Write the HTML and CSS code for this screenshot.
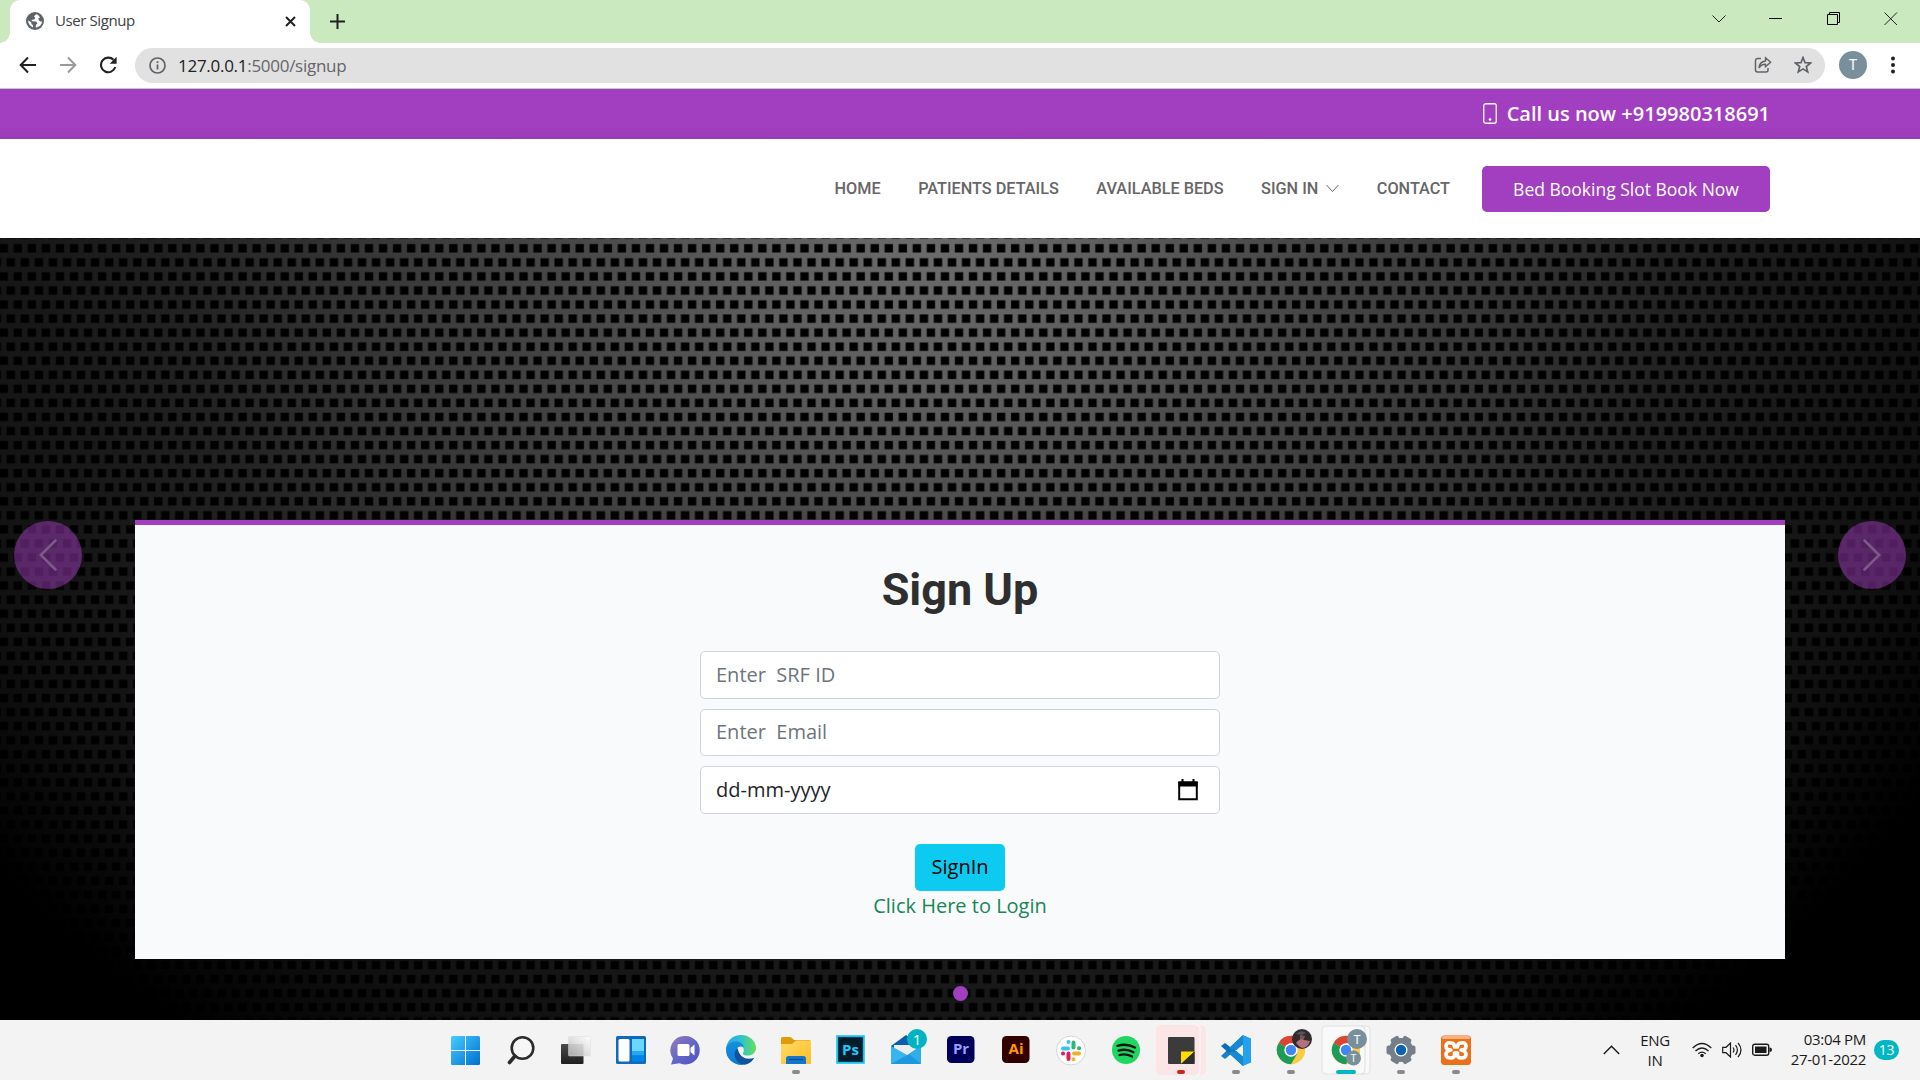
FILE: index.html
```html
<!DOCTYPE html>
<html lang="en">
<head>
<meta charset="utf-8">
<title>User Signup</title>
<link rel="stylesheet" href="styles.css">
</head>
<body>
<div class="tabstrip">
  <div class="tab">
    <svg class="globe" width="18" height="18" viewBox="0 0 18 18"><circle cx="9" cy="9" r="9" fill="#5f6368"/><path d="M10 2.2 8 4.6l1.3 1.2-1 1.6-2.6.3.1 1.6 4.300 .3 1.300 1.900-1.500 1.400-.2 2.800C13.500 15 16 12.500 16 9.500c-1.800.5-2.200-.8-3.300-1.300l-.2-2 1.600-1C13 3.600 11.600 2.500 10 2.200zM2.100 8.300c0 3.300 2 6.200 5 7.200l-.2-2.600 -1.600-.9.1-1.500z" fill="#fff"/></svg>
    <span class="tab-title">User Signup</span>
    <svg class="tab-x" width="11" height="11" viewBox="0 0 11 11"><path d="M1 1l9 9M10 1l-9 9" stroke="#202124" stroke-width="2"/></svg>
  </div>
  <svg class="newtab" width="15" height="15" viewBox="0 0 15 15"><path d="M7.500 0v15M0 7.500h15" stroke="#202124" stroke-width="2"/></svg>
  <div class="winctl">
    <svg width="14" height="14" viewBox="0 0 14 14"><path d="M.5 3.500 7 10l6.500-6.500" fill="none" stroke="#222"/></svg>
    <svg width="14" height="14" viewBox="0 0 14 14"><path d="M0 6.500h13" stroke="#000"/></svg>
    <svg width="14" height="14" viewBox="0 0 14 14"><path d="M.5 2.500h10v10H.5zM2.500 2.500v-2h10v10h-2" fill="none" stroke="#000"/></svg>
    <svg width="14" height="14" viewBox="0 0 14 14"><path d="M.5.5l12.500 12.500M13 .5.5 13" stroke="#222"/></svg>
  </div>
</div>
<div class="toolbar">
  <svg width="18" height="18" viewBox="0 0 18 18"><path d="M17 9H2M9 1.500 1.700 9 9 16.500" fill="none" stroke="#202124" stroke-width="2"/></svg>
  <svg width="18" height="18" viewBox="0 0 18 18"><path d="M1 9h15M9 1.500 16.300 9 9 16.500" fill="none" stroke="#9a9a9c" stroke-width="2"/></svg>
  <svg width="18" height="18" viewBox="0 0 18 18"><path d="M14.500 3.800A7.300 7.300 0 1 0 16.300 11" fill="none" stroke="#202124" stroke-width="2.100"/><path d="M17.600 .8v7h-7z" fill="#202124"/></svg>
  <div class="omnibox">
    <svg width="17" height="17" viewBox="0 0 17 17"><circle cx="8.500" cy="8.500" r="7.500" fill="none" stroke="#5f6368" stroke-width="1.700"/><path d="M8.500 7.500v5M8.500 4.200v1.900" stroke="#5f6368" stroke-width="1.800"/></svg>
    <span class="url"><b>127.0.0.1</b>:5000/signup</span>
    <svg class="share" width="18" height="18" viewBox="0 0 18 18"><path d="M7 2.500H3.500a2 2 0 0 0-2 2v9.500a2 2 0 0 0 2 2H12a2 2 0 0 0 2-2v-2" fill="none" stroke="#5f6368" stroke-width="1.500"/><path d="M11.500 1.800 16.600 6.300l-5.100 4.400V8.200C8.500 8.200 6.300 9.500 5 12c.2-4 2.500-6.500 6.500-7z" fill="none" stroke="#5f6368" stroke-width="1.400"/></svg>
    <svg width="18" height="18" viewBox="0 0 18 18"><path d="M9 1.500l2 5.200 5.600.3-4.300 3.500 1.400 5.400L9 12.900l-4.700 3 1.400-5.400L1.400 7l5.600-.3z" fill="none" stroke="#5f6368" stroke-width="1.700"/></svg>
  </div>
  <span class="avatar">T</span>
  <svg class="dots" width="4" height="18" viewBox="0 0 4 18"><g fill="#202124"><circle cx="2" cy="2.500" r="2"/><circle cx="2" cy="9" r="2"/><circle cx="2" cy="15.500" r="2"/></g></svg>
</div>
<div class="topbar">
  <svg width="14" height="21" viewBox="0 0 14 21"><rect x=".75" y=".75" width="12.500" height="19.500" rx="2" fill="none" stroke="#fff" stroke-width="1.300"/><circle cx="7" cy="16.500" r="1.300" fill="#fff"/></svg>
  <span>Call us now +919980318691</span>
</div>
<header class="header">
  <nav class="nav">
    <a class="n1">HOME</a><a class="n2">PATIENTS DETAILS</a><a class="n3">AVAILABLE BEDS</a>
    <a class="n4">SIGN IN <svg width="13" height="9" viewBox="0 0 13 9"><path d="M.5 1 6.500 7.500 12.500 1" fill="none" stroke="#666"/></svg></a>
    <a class="n5">CONTACT</a>
  </nav>
  <a class="book">Bed Booking Slot Book Now</a>
</header>
<main class="hero">
  <svg class="mesh" width="1920" height="782" viewBox="0 238 1920 782">
    <defs>
      <radialGradient id="glow" gradientUnits="userSpaceOnUse" cx="0" cy="0" r="1" gradientTransform="translate(930 245) scale(1190 1000)">
        <stop offset="0" stop-color="#6b6b6b"/><stop offset=".15" stop-color="#5e5e5e"/><stop offset=".29" stop-color="#494949"/><stop offset=".48" stop-color="#363636"/><stop offset=".62" stop-color="#232323"/><stop offset=".75" stop-color="#181818"/><stop offset=".87" stop-color="#101010"/><stop offset="1" stop-color="#000"/>
      </radialGradient>
      <pattern id="holes" patternUnits="userSpaceOnUse" x="10.800" y="241.300" width="14.048" height="28.108">
        <g fill="#000" fill-opacity=".35"><rect x="2.500" y="2.500" width="9" height="9"/><rect x="-4.500" y="16.600" width="9" height="9"/><rect x="9.550" y="16.600" width="9" height="9"/></g>
        <g fill="#000"><rect x="3" y="3" width="8" height="8"/><rect x="-4" y="17.100" width="8" height="8"/><rect x="10.050" y="17.100" width="8" height="8"/></g>
      </pattern>
    </defs>
    <rect y="238" width="1920" height="782" fill="url(#glow)"/>
    <rect y="238" width="1920" height="782" fill="url(#holes)"/>
  </svg>
  <div class="arrow"><svg width="18" height="32" viewBox="0 0 18 32"><path d="M16.500 1.500 1.800 16l14.700 14.500" fill="none" stroke="#7c5a87" stroke-width="2.600" stroke-linecap="round"/></svg></div>
  <section class="card">
    <h2>Sign Up</h2>
    <form>
      <div class="field">Enter&nbsp; SRF ID</div>
      <div class="field email">Enter&nbsp; Email</div>
      <div class="field date">dd-mm-yyyy
        <svg width="20" height="22" viewBox="0 0 20 22"><path d="M1.200 3.500h17.600v16.800H1.200z" fill="none" stroke="#000" stroke-width="2"/><path d="M.5 2.500h19v5H.5zM3.500 0h2v3h-2zM14.500 0h2v3h-2z"/></svg></div>
      <a class="signin">SignIn</a>
      <a class="login">Click Here to Login</a>
    </form>
  </section>
  <div class="arrow"><svg width="18" height="32" viewBox="0 0 18 32"><path d="M1.500 1.500 16.200 16 1.500 30.500" fill="none" stroke="#7c5a87" stroke-width="2.600" stroke-linecap="round"/></svg></div>
  <span class="indicator"></span>
</main>
<footer class="taskbar">
  <div class="apps">
    <svg viewBox="0 0 55 60"><defs><linearGradient id="win" x1="0" y1="0" x2="1" y2="1"><stop stop-color="#45cdff"/><stop offset="1" stop-color="#006fd0"/></linearGradient><clipPath id="wc"><path d="M13 16h14v14H13zM28 16h14v14H28zM13 31h14v14H13zM28 31h14v14H28z"/></clipPath></defs><rect x="13" y="16" width="29" height="29" rx="1.500" fill="url(#win)" clip-path="url(#wc)"/></svg>
    <svg viewBox="0 0 55 60"><circle cx="29.500" cy="28" r="10.800" fill="#f6f6f6" stroke="#2b2b2b" stroke-width="2.600"/><path d="M22 36 16.500 42.500" stroke="#2b2b2b" stroke-width="3.600" stroke-linecap="round"/></svg>
    <svg viewBox="0 0 55 60"><defs><linearGradient id="tv" x1="0" y1="0" x2="0" y2="1"><stop stop-color="#4b4b4b"/><stop offset="1" stop-color="#1e1e1e"/></linearGradient><linearGradient id="tw" x1="1" y1="0" x2="0" y2="1"><stop stop-color="#fff"/><stop offset="1" stop-color="#bcbcbc"/></linearGradient></defs><rect x="13" y="24" width="22.500" height="20" rx="1" fill="url(#tv)"/><rect x="20.500" y="16.500" width="22" height="19.500" rx="1" fill="url(#tw)" fill-opacity=".88" stroke="#ddd" stroke-width=".5"/></svg>
    <svg viewBox="0 0 55 60"><rect x="13" y="16" width="30" height="28" rx="1.500" fill="#1169bd"/><rect x="15.500" y="19" width="11" height="22.500" rx="1.500" fill="#fff"/><path d="M29 19h12v12H29z" fill="#69d7ff"/><path d="M29 31h12v4.500H29z" fill="#20a8f5"/><path d="M29 35.500h12v6H29z" fill="#0084e8"/></svg>
    <svg viewBox="0 0 55 60"><defs><linearGradient id="chat" x1="0" y1="0" x2="1" y2="1"><stop stop-color="#9b79ba"/><stop offset=".5" stop-color="#6367c7"/><stop offset="1" stop-color="#4f50bf"/></linearGradient></defs><path d="M27.500 16a14.300 14.300 0 1 1-6 27.300L13 44.500l2-6A14.300 14.300 0 0 1 27.500 16z" fill="url(#chat)"/><rect x="19.500" y="24" width="12" height="12" rx="1.500" fill="#fff"/><path d="m32.500 28 4-3.500v11l-4-3.500z" fill="#fff"/></svg>
    <svg viewBox="0 0 55 60"><defs><linearGradient id="ed1"><stop stop-color="#2aa4e6"/><stop offset=".5" stop-color="#2fc2cf"/><stop offset="1" stop-color="#68e052"/></linearGradient><linearGradient id="ed2" x1="0" y1="0" x2="0" y2="1"><stop stop-color="#1490df"/><stop offset="1" stop-color="#0c79d4"/></linearGradient></defs><path d="M13 29C14 20 20 15 28 15c9 0 15 6.500 15 13 0 5-4 7.500-8.500 7.500-4 0-5.500-1.300-4-3.500 1.500-3-1-7-6-7S14 28 13 29z" fill="url(#ed1)"/><path d="M13 29c1-5 5-7.500 10-7.500 4 0 7 2 7.800 5.500C25 25 22.500 29 23 34c.5 5 4 9.500 8.500 10.800C21 46 12.500 39 13 29z" fill="url(#ed2)"/><path d="M24.500 28c-5 4-3.500 15.500 7 16.700 4-.7 8-3.200 9.800-7-7 2.800-15 .3-16.800-9.700z" fill="#11529e"/></svg>
    <svg viewBox="0 0 55 60"><defs><linearGradient id="fo" x1="0" y1="0" x2="1" y2="1"><stop stop-color="#ffdb69"/><stop offset="1" stop-color="#ffbd22"/></linearGradient></defs><path d="M13 18.500q0-1.500 1.500-1.500H22q1.500 0 2.500 1.500l1.500 1.500h16v5H13z" fill="#e09b0a"/><path d="M13 24h11l4-3.500h15V44H13z" fill="url(#fo)"/><path d="M18 44v-5.500q0-2.500 2.500-2.500h15q2.500 0 2.500 2.500V44z" fill="#1476cb"/><path d="M21 39.500h14" stroke="#0a4e91" stroke-width="1.300"/><rect class="run" x="24" y="50" width="8" height="4" rx="2"/></svg>
    <svg viewBox="0 0 55 60"><rect x="14.200" y="16.200" width="26.600" height="26.600" fill="#001d2b" stroke="#18c3f3" stroke-width="2"/><text x="27.500" y="34.500" class="ad" fill="#23c7ff">Ps</text></svg>
    <svg viewBox="0 0 55 60"><path d="M13 26 28 15l15 11v4H13z" fill="#0a5fac"/><path d="M16 25h24v6l-10 8-14-8z" fill="#ececec"/><path d="M13 26l18 10-9 8h-9z" fill="#36b5ef"/><path d="M43 26v18H13l18-10z" fill="#1c98df"/><path d="M31 34l12 10V26z" fill="#30aeea"/><circle cx="39" cy="19" r="10" fill="#00b4c3"/><text x="39" y="24.500" class="bt">1</text></svg>
    <svg viewBox="0 0 55 60"><rect x="14" y="16" width="27.500" height="27" rx="4.500" fill="#00005b"/><text x="28" y="34" class="ad" fill="#9d9dff">Pr</text></svg>
    <svg viewBox="0 0 55 60"><rect x="14" y="16" width="27.500" height="27" rx="4.500" fill="#330000"/><text x="28" y="34" class="ad" fill="#ff9a00">Ai</text></svg>
    <svg viewBox="0 0 55 60"><circle cx="28" cy="30.500" r="14.500" fill="#fff" stroke="#d5d5d5"/><g fill="none" stroke-width="4" stroke-linecap="round"><path d="M20 28.500h5M25.500 22v.1" stroke="#36c5f0"/><path d="M30.500 22.500v5M36 28.300h.1" stroke="#2eb67d"/><path d="M31 33.500h5M30.500 39.200v.1" stroke="#ecb22e"/><path d="M25.500 33.500v5.500M20 33.500h.1" stroke="#e01e5a"/></g></svg>
    <svg viewBox="0 0 55 60"><circle cx="28" cy="30" r="14" fill="#1ed760"/><path d="M19.500 25.800q9-2.800 17.500 1.700M20.500 30.600q8-2.300 15 1.600M21.500 35q6.500-1.800 12.500 1.600" fill="none" stroke="#141414" stroke-width="2.300" stroke-linecap="round"/></svg>
    <svg viewBox="0 0 55 60"><rect x="3" y="5" width="50" height="50" rx="5" fill="#fce5e7"/><path d="M43 5q4 0 4 4v42q0 4-4 4" fill="none" stroke="#fff3f4" stroke-width="1.300"/><rect x="15" y="17" width="26.500" height="27" rx="1" fill="#3b3b3b"/><path d="M28 44V31.500h13.500z" fill="#ffdd00"/><path d="M28 44 41.500 31.500V44z" fill="#2f2f2f"/><rect x="24" y="50" width="8" height="4" rx="2" fill="#c42b1c"/></svg>
    <svg viewBox="0 0 55 60"><path d="m35 15 8 3.500v24L35 46z" fill="#23a0ee"/><path d="M35 15v9L17 39l-4-3z" fill="#1683cc"/><path d="M35 46v-9L17 23l-4 3z" fill="#0c6fb8"/><path d="M35 15 21 28l5 4 9-7.500zM35 46 21 33l5-4 9 7.500z" fill="#1788d2"/><rect class="run" x="24" y="50" width="8" height="4" rx="2"/></svg>
    <svg viewBox="0 0 55 60"><g id="chrome"><circle cx="28" cy="30" r="14.200" fill="#fbcb43"/><path d="M28 30 15.700 22.900A14.200 14.200 0 0 1 40.300 22.900H28z" fill="#dc4437"/><path d="M15.700 22.900A14.200 14.200 0 0 0 28 44.200l6.200-10.500L28 30z" fill="#1e9c55"/><circle cx="28" cy="30" r="6.700" fill="#fff"/><circle cx="28" cy="30" r="5.200" fill="#4285f4"/></g><circle cx="39" cy="19" r="10" fill="#332a2d"/><path d="M33 23q5-6 8-3l6 1q-2 7-8 7-3-1-6-5z" fill="#b3727b"/><path d="M33 14q5-5 10-1l-4 2z" fill="#4e5659"/><path d="M37 15l5 1-1 3h-4z" fill="#7c5654"/><rect class="run" x="24" y="50" width="8" height="4" rx="2"/></svg>
    <svg viewBox="0 0 55 60"><rect x="4" y="6" width="48" height="48" rx="4" fill="#f9f9f9" stroke="#e2e2e2"/><path d="M43 6q4 0 4 4v40q0 4-4 4" fill="none" stroke="#ddd"/><use href="#chrome"/><circle cx="39" cy="19" r="10" fill="#78909c"/><text x="39" y="23.500" class="tt">T</text><circle cx="35.500" cy="38" r="7.500" fill="#78909c"/><text x="35.500" y="41.500" class="tt small">T</text><rect x="18" y="50" width="20" height="4" rx="2" fill="#00b7c3"/></svg>
    <svg viewBox="0 0 55 60"><g fill="#757f89"><circle cx="28" cy="30" r="12"/><rect x="23.500" y="15.500" width="9" height="29" rx="2" transform="rotate(30 28 30)"/><rect x="23.500" y="15.500" width="9" height="29" rx="2" transform="rotate(90 28 30)"/><rect x="23.500" y="15.500" width="9" height="29" rx="2" transform="rotate(-30 28 30)"/></g><circle cx="28" cy="30" r="6.500" fill="#fff"/><circle cx="28" cy="30" r="5.200" fill="#0b62b5"/><rect class="run" x="24" y="50" width="8" height="4" rx="2"/></svg>
    <svg viewBox="0 0 55 60"><rect x="13" y="15.500" width="30" height="29.500" rx="3.500" fill="#ec6f1a"/><rect x="14" y="16" width="28" height="3" rx="1.500" fill="#ffb27e"/><path d="M23 23q-5-1-5 3t5 4q-5 1-5 4.500t5 3.500q3.500 0 3.500-3V33h3v2q0 3 3.500 3 5 0 5-3.500T33 30q5 0 5-4t-5-3q-3.500 0-3.500 4h-3q0-4-3.500-4z" fill="none" stroke="#fff" stroke-width="3.600" stroke-linejoin="round"/><rect class="run" x="24" y="50" width="8" height="4" rx="2"/></svg>
  </div>
  <div class="tray">
    <svg class="up" width="17" height="10" viewBox="0 0 17 10"><path d="M.8 9 8.500 1.200 16.200 9" fill="none" stroke="#1a1a1a" stroke-width="1.400"/></svg>
    <div class="lang">ENG<br>IN</div>
    <svg width="20" height="16" viewBox="0 0 20 16"><g fill="none" stroke="#1a1a1a" stroke-width="1.300"><path d="M.7 6Q10-3 19.300 6M3.500 9q6.500-6 13 0M6.300 11.800q3.700-3.300 7.400 0"/></g><circle cx="10" cy="13.500" r="1.800" fill="#1a1a1a"/></svg>
    <svg width="20" height="16" viewBox="0 0 20 16"><g fill="none" stroke="#1a1a1a" stroke-width="1.200"><path d="M.7 5.300h3.300L8.500 1v14L4 10.700H.7zM11 5.500q2 2.500 0 5M13.500 3.200q3.800 4.800 0 9.600M16 .8q6 7.200 0 14.400"/></g></svg>
    <svg width="20" height="14" viewBox="0 0 20 14"><rect x=".7" y="1.200" width="16" height="11" rx="2" fill="none" stroke="#1a1a1a" stroke-width="1.400"/><rect x="3" y="3.500" width="11.500" height="6.500" fill="#1a1a1a"/><path d="M17.500 4.500q2.500 0 2.500 2.300t-2.500 2.300z" fill="#1a1a1a"/></svg>
    <div class="clock">03:04 PM<br>27-01-2022</div>
    <span class="count">13</span>
  </div>
</footer>
</body>
</html>
```
FILE: styles.css
```css
* { box-sizing: border-box; }
body { margin: 0; width: 1920px; height: 1080px; overflow: hidden; display: flex; flex-direction: column; background: #fff; font-family: "Open Sans", "Noto Sans", sans-serif; }
svg { display: block; flex: none; }

.tabstrip { height: 43px; flex: none; background: #cae9bf; display: flex; align-items: flex-start; padding-left: 10px; }
.tab { position: relative; width: 300px; height: 43px; background: #fff; border-radius: 10px 10px 0 0; display: flex; align-items: center; padding: 0 14px 1px 16px; }
.tab::before, .tab::after { content: ""; position: absolute; bottom: 0; width: 10px; height: 10px; }
.tab::before { left: -10px; background: radial-gradient(circle at 0 0, transparent 9.5px, #fff 10px); }
.tab::after { right: -10px; background: radial-gradient(circle at 100% 0, transparent 9.5px, #fff 10px); }
.tab-title { margin: 0 0 2px 11px; font-size: 15px; color: #3c4043; letter-spacing: -.4px; }
.tab-x { margin-left: auto; }
.newtab { margin: 14px 0 0 20px; }
.winctl { margin: 12px 22px 0 auto; display: flex; gap: 43.3px; }

.toolbar { height: 46px; flex: none; border-bottom: 1px solid #c5c8c3; display: flex; align-items: center; padding: 0 24px 1px 19px; }
.toolbar > svg + svg:not(.dots) { margin-left: 22px; }
.omnibox { margin-left: 18px; width: 1690px; height: 35px; border-radius: 18px; background: #e1e1e1; display: flex; align-items: center; padding: 0 13px 0 14px; }
.url { margin-left: 12px; font-size: 17px; color: #63666a; letter-spacing: -.28px; }
.url b { font-weight: 400; color: #202124; }
.share { margin-left: auto; margin-right: 22px; }
.avatar { margin-left: 14px; width: 28px; height: 28px; border-radius: 50%; background: #78909c; color: #fff; font: 14px/28px Roboto, sans-serif; text-align: center; }
.dots { margin-left: auto; margin-right: 1px; }

.topbar { height: 50px; flex: none; background: linear-gradient(#a23ec0 75%, #9a3bb6); display: flex; align-items: center; justify-content: flex-end; gap: 10px; padding: 0 150px 1px 0; color: #fff; font-size: 20px; font-weight: 600; }
.header { height: 99px; flex: none; background: #fff; display: flex; align-items: center; justify-content: flex-end; padding-right: 150px; }
.nav { display: flex; align-items: center; gap: 37.5px; margin-right: 32px; font: 500 16.25px/20px Roboto, sans-serif; color: #666; }
.n4 { display: flex; align-items: center; gap: 8px; }
.book { width: 288px; height: 46px; border-radius: 5px; background: #a23ec0; color: #fff; font-size: 17.5px; line-height: 46px; text-align: center; }

.hero { position: relative; height: 782px; flex: none; background: #000; display: flex; justify-content: space-between; padding: 282px 14px 0; }
.mesh { position: absolute; left: 0; top: 0; }
.arrow { position: relative; width: 68px; height: 68px; margin-top: 1px; border-radius: 50%; background: rgba(162, 62, 192, .5); display: flex; align-items: center; justify-content: center; }
.card { position: relative; width: 1650px; height: 439px; background: #f8fafc; border-top: 5px solid #a23ec0; }
.card h2 { margin: 38px 0 0; font: 700 45px/54px Roboto, sans-serif; color: #2f2f2f; text-align: center; }
.card form { width: 520px; margin: 34px auto 0; display: flex; flex-direction: column; align-items: center; }
.field { width: 520px; height: 47.5px; margin-bottom: 10px; border: 1px solid #ced4da; border-radius: 5px; background: #fff; padding: 0 15px; font-size: 20px; line-height: 46px; color: #6c757d; }
.email { line-height: 44px; }
.date { display: flex; align-items: center; justify-content: space-between; padding-right: 21px; color: #212529; }
.signin { margin-top: 20px; width: 90px; height: 47px; border-radius: 5px; background: #0dcaf0; color: #000; font-size: 20px; line-height: 46px; text-align: center; }
.login { font-size: 20px; line-height: 30px; color: #198754; }
.indicator { position: absolute; left: 953px; top: 748px; width: 15px; height: 15px; border-radius: 50%; background: #a23ec0; }

.taskbar { height: 60px; flex: none; background: #f3f3f3; display: flex; justify-content: space-between; padding: 0 21px 0 438px; }
.apps { display: flex; }
.apps svg { width: 55px; height: 60px; }
.run { fill: #8a8a8a; }
.ad { font: 700 15px "Open Sans", sans-serif; text-anchor: middle; }
.bt { font: 15px "Open Sans", sans-serif; fill: #fff; text-anchor: middle; }
.tt { font: 12px Roboto, sans-serif; fill: #fff; text-anchor: middle; }
.small { font-size: 10px; }
.tray { display: flex; align-items: center; font-size: 15px; line-height: 20px; color: #1a1a1a; letter-spacing: -.3px; }
.lang { width: 40px; margin: 0 17px 1px 15px; text-align: center; }
.tray svg + svg { margin-left: 10px; }
.clock { width: 84px; margin: 0 8px 2px 10px; text-align: right; white-space: nowrap; }
.count { width: 25px; height: 20px; border-radius: 10px; background: #00b7c3; color: #fff; font-size: 14px; text-align: center; }
```
